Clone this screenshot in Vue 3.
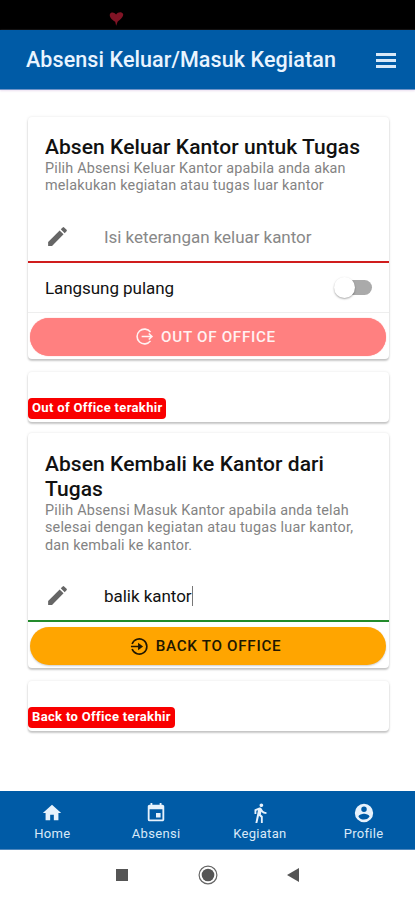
<script setup>
import { ref } from 'vue'

const leaveNote = ref('')
const returnNote = 'balik kantor'
const pencil = 'M3 17.25V21h3.75L17.81 9.94l-3.75-3.75L3 17.25zM20.71 7.04a1 1 0 0 0 0-1.41l-2.34-2.34a1 1 0 0 0-1.41 0l-1.83 1.83 3.75 3.75 1.83-1.83z'
const tabs = [
  { id: 'home', label: 'Home', path: 'M10 20v-6h4v6h5v-8h3L12 3 2 12h3v8z' },
  { id: 'absensi', label: 'Absensi', path: 'M17 12h-5v5h5v-5zM16 1v2H8V1H6v2H5c-1.11 0-1.99.9-1.99 2L3 19a2 2 0 0 0 2 2h14c1.1 0 2-.9 2-2V5c0-1.1-.9-2-2-2h-1V1h-2zm3 18H5V8h14v11z' },
  { id: 'kegiatan', label: 'Kegiatan', path: 'M13.5 5.5c1.1 0 2-.9 2-2s-.9-2-2-2-2 .9-2 2 .9 2 2 2zM9.8 8.9L7 23h2.1l1.8-8 2.1 2v6h2v-7.5l-2.1-2 .6-3C14.8 12 16.8 13 19 13v-2c-1.9 0-3.5-1-4.3-2.4l-1-1.6c-.4-.6-1-1-1.7-1-.3 0-.5.1-.8.1L6 8.3V13h2V9.6l1.8-.7' },
  { id: 'profile', label: 'Profile', path: 'M12 2a10 10 0 1 0 0 20 10 10 0 0 0 0-20zm0 3a3 3 0 1 1 0 6 3 3 0 0 1 0-6zm0 14.2a7.2 7.2 0 0 1-6-3.22c.03-1.99 4-3.08 6-3.08s5.97 1.09 6 3.08a7.2 7.2 0 0 1-6 3.22z' },
]
</script>

<template>
  <div class="phone">
    <div class="status">
      <svg class="heart" viewBox="0 0 14 14"><path d="M6.7 13.8 5.8 10C2.5 8 .2 5.5.8 3 1.6.6 5 .9 6.6 3.2 8.5.5 12 .4 13.2 2.8c.5 2.7-2.5 5-5.2 7.2L6.7 13.8z" /></svg>
    </div>
    <header class="toolbar">
      <h1>Absensi Keluar/Masuk Kegiatan</h1>
      <div class="menu"><i></i><i></i><i></i></div>
    </header>

    <main>
      <section class="card leave">
        <h2><span>Absen Keluar Kantor untuk Tugas</span></h2>
        <p><span>Pilih Absensi Keluar Kantor apabila anda akan</span><span>melakukan kegiatan atau tugas luar kantor</span></p>
        <div class="field invalid">
          <svg viewBox="0 0 24 24"><path :d="pencil" /></svg>
          <input v-model="leaveNote" placeholder="Isi keterangan keluar kantor">
        </div>
        <div class="option">
          <span>Langsung pulang</span>
          <div class="toggle"><div class="knob"></div></div>
        </div>
        <button class="action out">
          <svg viewBox="0 0 20 20"><path d="M16.3 5.4A7.8 7.8 0 1 0 16.3 14.6M7 10h10.5M14.5 6.8 17.8 10l-3.3 3.2" /></svg>
          <span>OUT OF OFFICE</span>
        </button>
      </section>

      <section class="card last"><span class="badge b1">Out of Office terakhir</span></section>

      <section class="card return">
        <h2><span>Absen Kembali ke Kantor dari</span><span>Tugas</span></h2>
        <p><span>Pilih Absensi Masuk Kantor apabila anda telah</span><span>selesai dengan kegiatan atau tugas luar kantor,</span><span>dan kembali ke kantor.</span></p>
        <div class="field valid">
          <svg viewBox="0 0 24 24"><path :d="pencil" /></svg>
          <span class="value">{{ returnNote }}</span><i class="caret"></i>
        </div>
        <button class="action back">
          <svg viewBox="0 0 20 20"><path d="M2.2 7.3A8 8 0 1 1 2.2 12.7M1 10h9" /><path class="solid" d="M8.5 6 13.8 10 8.5 14z" /></svg>
          <span>BACK TO OFFICE</span>
        </button>
      </section>

      <section class="card last"><span class="badge b2">Back to Office terakhir</span></section>
    </main>

    <nav class="tabs">
      <div v-for="tab in tabs" :key="tab.id" class="tab">
        <svg viewBox="0 0 24 24"><path :d="tab.path" /></svg>
        <span>{{ tab.label }}</span>
      </div>
    </nav>
    <div class="system">
      <svg viewBox="0 0 12 12"><path d="M0 0h12v12H0z" /></svg>
      <svg class="circle" viewBox="0 0 20 20"><circle cx="10" cy="10" r="8.9" /><circle class="dot" cx="10" cy="10" r="6.3" /></svg>
      <svg class="tri" viewBox="0 0 12 14"><path d="M12 0v14L0 7z" /></svg>
    </div>
  </div>
</template>

<style>
body { background: #fff; }
</style>

<style scoped>
* { box-sizing: border-box; }
.phone { width: 415px; height: 900px; display: flex; flex-direction: column; background: #fff; font-family: Roboto, sans-serif; color: #111; white-space: nowrap; overflow: hidden; }
.status { height: 30px; flex: none; background: #000; padding: 11px 0 0 109px; }
.heart { display: block; width: 15px; height: 15px; fill: #801425; }
.toolbar { height: 60px; flex: none; background: #005ba6; display: flex; align-items: center; justify-content: space-between; padding: 1px 19px 0 26px; border-bottom: 1px solid #6f94c8; box-shadow: 0 1px 2px #ecdff0; color: #e9f4ff; }
h1 { margin: 0; font-size: 21.5px; line-height: 28px; font-weight: 500; letter-spacing: .09px; }
.menu { width: 20px; height: 15px; display: flex; flex-direction: column; justify-content: space-between; }
.menu i { height: 3px; background: #d9e9f8; }
main { height: 701px; flex: none; padding: 27px 26px 0 28px; display: flex; flex-direction: column; }
.card { flex: none; background: #fff; border-radius: 4px; box-shadow: 0 2px 2px rgba(0,0,0,.2), 0 0 3px rgba(0,0,0,.11); }
.leave { height: 242px; padding-top: 18px; margin-bottom: 13px; }
.return { height: 235px; padding-top: 19px; margin-bottom: 13px; }
h2 { margin: 0 0 0 17px; font-size: 21px; line-height: 25px; font-weight: 500; letter-spacing: .07px; color: #111; }
h2 span, p span { display: block; }
p { margin: 0 0 17px 17px; font-size: 14.4px; line-height: 17.4px; letter-spacing: .18px; color: #838383; }
.field { height: 51px; display: flex; align-items: center; padding-left: 17px; font-size: 17px; letter-spacing: -.04px; }
.field svg { width: 25px; height: 25px; margin-right: 34px; fill: #666; }
.field input { flex: 1; min-width: 0; padding: 1px 0 0; border: 0; outline: 0; background: transparent; font: inherit; letter-spacing: inherit; color: #111; }
.field input::placeholder { color: #888; opacity: 1; }
.invalid { border-bottom: 2px solid #d01d1d; }
.valid { border-bottom: 2px solid #238b2b; }
.caret { width: 1px; height: 20px; background: #777; }
.option { height: 50px; display: flex; align-items: center; justify-content: space-between; padding: 1px 17px 0 17px; border-bottom: 1px solid #eee; font-size: 17px; letter-spacing: -.06px; }
.toggle { width: 34px; height: 15px; border-radius: 8px; background: #aaa; display: flex; align-items: center; }
.knob { width: 21px; height: 21px; flex: none; margin-left: -4px; border-radius: 50%; background: #fff; box-shadow: 0 1px 2px rgba(0,0,0,.35); }
.action { width: 356px; height: 38px; margin: 5px 0 0 2px; border: 0; padding: 0 5px 0 0; border-radius: 19px; display: flex; align-items: center; justify-content: center; font: 500 15.2px/20px Roboto, sans-serif; letter-spacing: .7px; }
.action svg { width: 19px; height: 19px; margin-right: 7px; fill: none; stroke: currentColor; stroke-width: 1.7; }
.out { background: #ff8080; color: #fff2f2; box-shadow: 0 0 1px #ff8080; }
.back { background: #ffa500; color: #211700; box-shadow: 0 1px 2px rgba(0,0,0,.2); }
.back .solid { fill: currentColor; stroke: none; }
.last { height: 50px; display: flex; align-items: flex-end; padding-bottom: 3px; margin-bottom: 11px; }
.badge { height: 21px; background: #f90000; color: #fff; border-radius: 4px; font-size: 13px; font-weight: 700; line-height: 19px; padding-left: 4px; letter-spacing: .34px; }
.b1 { width: 138px; }
.b2 { width: 147px; }
.tabs { height: 59px; flex: none; background: #005ba6; display: grid; grid-template-columns: repeat(4, 1fr); color: #d9e9f8; border-bottom: 1px solid #4e87bd; }
.tab { display: flex; flex-direction: column; align-items: center; padding: 11px 0 0 1px; font-size: 13px; line-height: 16px; letter-spacing: .3px; }
.tab svg { width: 22px; height: 22px; fill: #e7f2fc; margin-bottom: 2px; }
.system { height: 50px; flex: none; display: flex; align-items: center; padding-left: 116px; background: #fff; }
.system svg { width: 12px; height: 12px; fill: #555; }
.system .circle { width: 20px; height: 20px; margin-left: 70px; fill: none; stroke: #666; stroke-width: 1.2; }
.system .dot { fill: #555; stroke: none; }
.system .tri { height: 14px; margin-left: 69px; }
</style>
